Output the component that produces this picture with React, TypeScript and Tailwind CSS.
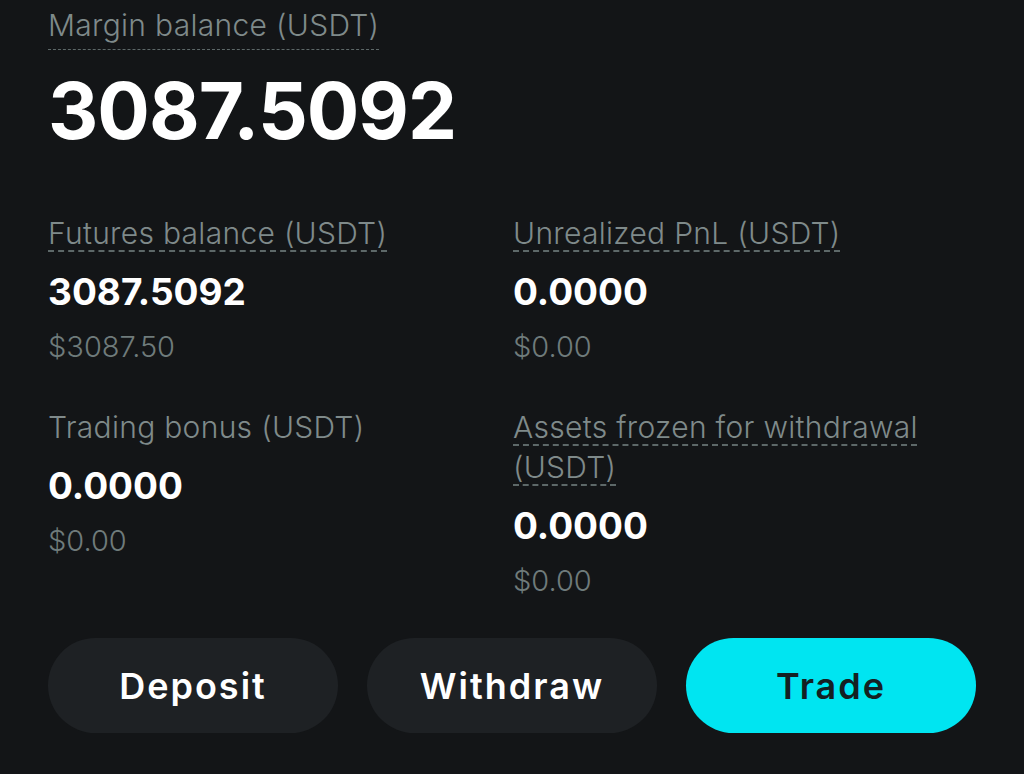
import React from "react";

const label = "font-['Inter',sans-serif] font-light text-[#7f8a8a] text-[30px] leading-[40px] tracking-[0.3px]";
const dashed = "underline decoration-dashed decoration-[#5d6868] decoration-[1.5px] underline-offset-[6px]";

type Cell = { title: string; value: string; usd: string; dash: boolean };

const cells: Cell[] = [
  { title: "Futures balance (USDT)", value: "3087.5092", usd: "$3087.50", dash: true },
  { title: "Unrealized PnL (USDT)", value: "0.0000", usd: "$0.00", dash: true },
  { title: "Trading bonus (USDT)", value: "0.0000", usd: "$0.00", dash: false },
  { title: "Assets frozen for withdrawal (USDT)", value: "0.0000", usd: "$0.00", dash: true },
];

const Item = ({ c }: { c: Cell }) => (
  <div className="flex flex-col pr-[40px]">
    <p className={label}>
      <span className={c.dash ? dashed : ""}>{c.title}</span>
    </p>
    <p className="mt-[15px] font-['Inter',sans-serif] font-bold text-white text-[37px] leading-[48px]">{c.value}</p>
    <p className="mt-[11px] font-['Inter',sans-serif] font-light text-[#6f7b7b] text-[29px] leading-[40px]">{c.usd}</p>
  </div>
);

const btn = "w-[290px] h-[95px] rounded-full font-['Inter',sans-serif] font-semibold text-[36px] tracking-[2px]";

export default function App() {
  return (
    <div className="w-[1024px] h-[774px] bg-[#131517] overflow-hidden px-[48px] pt-[5px]">
      <div className="inline-block border-b-[1.5px] border-dashed border-[#5d6868] pb-[4px]">
        <p className={label}>Margin balance (USDT)</p>
      </div>
      <p className="mt-[16px] font-['Inter',sans-serif] font-bold text-white text-[78px] leading-[90px] tracking-[-1px]">3087.5092</p>

      <div className="mt-[57px] grid grid-cols-2 gap-y-[40px] w-[930px]">
        {cells.map((c) => (
          <Item key={c.title} c={c} />
        ))}
      </div>

      <div className="mt-[37px] flex gap-[29px]">
        <button className={`${btn} bg-[#1e2124] text-white`}>Deposit</button>
        <button className={`${btn} bg-[#1e2124] text-white`}>Withdraw</button>
        <button className={`${btn} bg-[#00e5f1] text-[#142022]`}>Trade</button>
      </div>
    </div>
  );
}
